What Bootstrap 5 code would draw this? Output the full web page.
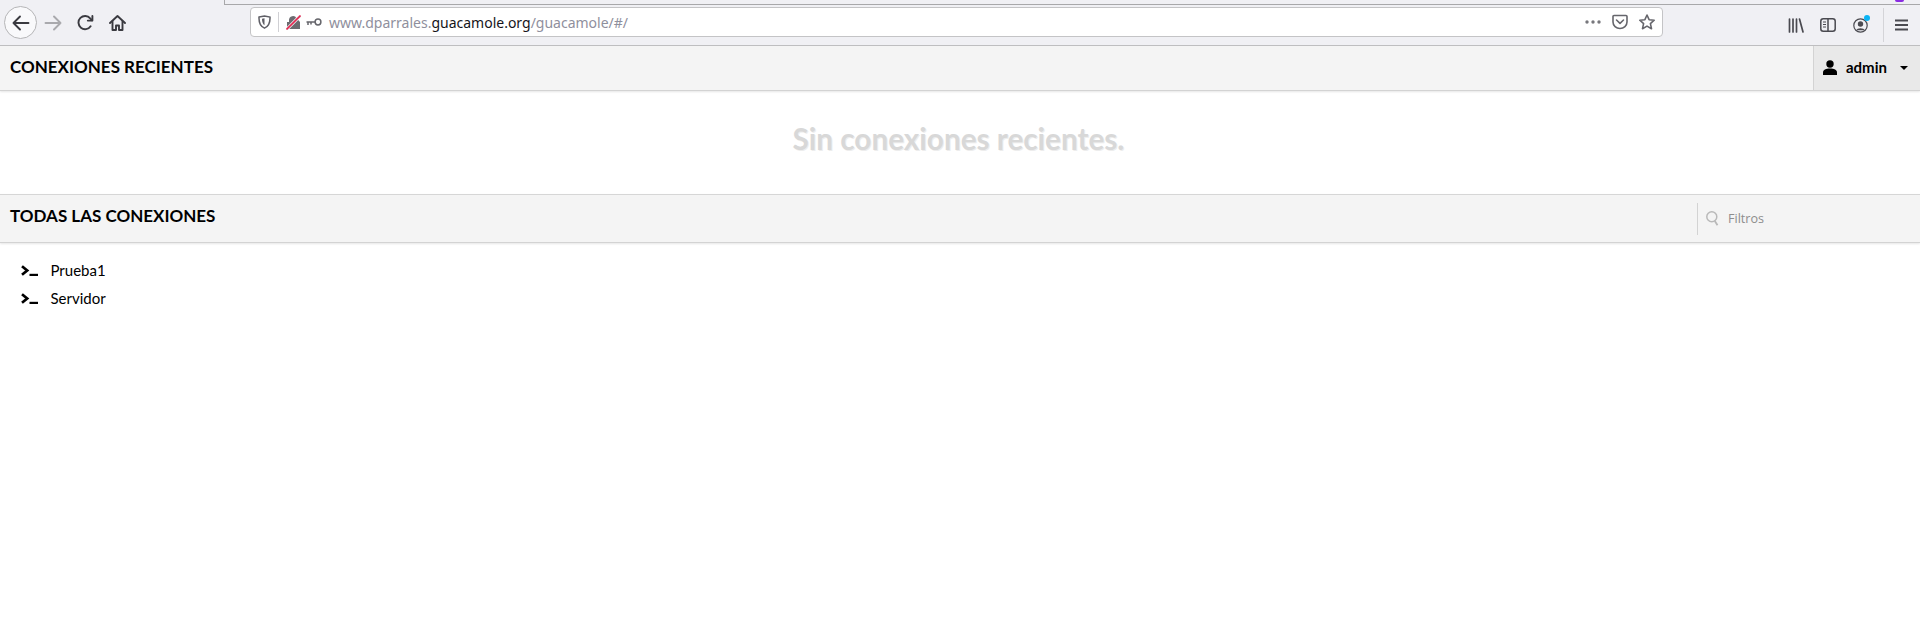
<!DOCTYPE html>
<html lang="es">
<head>
<meta charset="utf-8">
<title>Guacamole</title>
<link href="https://cdn.jsdelivr.net/npm/bootstrap@5.3.0/dist/css/bootstrap.min.css" rel="stylesheet">
<style>
html,body{height:100%;margin:0;background:#fff;overflow:hidden}
body{font-family:"Lato","Liberation Sans",sans-serif;color:#000}
.ffbar{height:46px;background:#f0f0f4;border-bottom:1px solid #bebec0;position:relative}
.tabedge{position:absolute;left:224px;right:0;top:0;height:5px;border-left:1px solid #a8a8aa;border-bottom:1px solid #a8a8aa}
.purplebit{position:absolute;left:1895px;top:0;width:9px;height:2px;background:#8a2be2;border-radius:0 0 5px 5px}
.navgroup{padding-left:4px;width:250px}
.circlebtn{width:33px;height:33px;border:1px solid #b5b5b7;border-radius:50%;background:#f9f9fb}
.navicon{width:32px;height:32px}
.urlbox{width:1413px;height:30px;margin-top:-1px;background:#fff;border:1px solid #c4c4c6;border-radius:4px;font-family:"Noto Sans","Open Sans",sans-serif;font-size:14px;color:#8f8f9d}
.shieldcell{width:28px;height:20px;border-right:1px solid #d0d0d4}
.lockicon{margin-left:7px}
.keyicon{margin-left:5px}
.urltext{margin-left:7px}
.urlhost{color:#15141a}
.toolicon{width:16px;height:16px}
.pageactions{gap:11px;padding-right:7px}
.rightbar{position:absolute;left:1788px;top:8px;height:34px;width:132px}
.rsep{width:1px;height:34px;background:#d4d4d8;margin-left:10px}
.sideicon{margin-left:16px}
.accountwrap{width:20px;height:20px;margin-left:17px}
.accountsvg{left:0;top:3px}
.accountdot{left:11px;top:0;width:6px;height:6px;background:#0ab4f5}
.menuicon{margin-left:11px}
.secbar{background:#f4f4f4;border-bottom:1px solid #d3d3d3;box-shadow:0 1px 2px rgba(0,0,0,.1)}
.topsec{height:45px}
.midsec{height:49px;border-top:1px solid #d6d6d6}
.sectitle{font-size:17px;font-weight:700;padding-left:10px;margin:0 0 4px;line-height:1}
.midsec .sectitle{margin-bottom:6px}
.userbox{width:107px;height:44px;background:#e9e9e9;border-left:1px solid #d3d3d3;padding-left:9px;font-size:15px;font-weight:700;padding-bottom:1px}
.unametxt{margin-left:9px}
.caretdown{width:0;height:0;border-left:4.5px solid transparent;border-right:4.5px solid transparent;border-top:4px solid #000;margin-left:13px}
.emptymsg{height:103px;font-size:29.7px;font-weight:700;color:#d8d8d8;text-shadow:1px 1px 0 #ededed;padding:0 3px 7px 0}
.filterbox{width:223px;height:32px;padding-left:8px;border-left:1px solid #d3d3d3;font-family:"Open Sans",sans-serif;font-size:12.6px;color:#8d8d8d}
.filtertxt{margin-left:9px;padding-top:2px}
.connlist{padding:13px 0 0 21px;font-size:15px}
.connitem{height:28px;gap:12.5px}
</style>
</head>
<body>
<div class="ffbar d-flex align-items-center">
  <div class="tabedge"></div>
  <div class="purplebit"></div>
  <div class="navgroup d-flex align-items-center">
    <div class="circlebtn d-flex align-items-center justify-content-center">
      <svg width="18" height="16" viewBox="0 0 18 16" fill="none" stroke="#3a3a40" stroke-width="1.9" stroke-linecap="round" stroke-linejoin="round"><path d="M1.500 8H16.500M8 1.500 1.500 8 8 14.500"/></svg>
    </div>
    <div class="navicon d-flex align-items-center justify-content-center">
      <svg width="18" height="16" viewBox="0 0 18 16" fill="none" stroke="#a9a9ad" stroke-width="1.9" stroke-linecap="round" stroke-linejoin="round"><path d="M1.500 8H16.500M10 1.500 16.500 8 10 14.500"/></svg>
    </div>
    <div class="navicon d-flex align-items-center justify-content-center">
      <svg width="17" height="16" viewBox="0 0 17 16" fill="none" stroke="#3a3a40" stroke-width="1.9" stroke-linecap="round" stroke-linejoin="round"><path d="M13.600 11.200A6.600 6.600 0 1 1 13.200 3.400L15 5.300"/><path d="M15.400 1V5.600H10.800"/></svg>
    </div>
    <div class="navicon d-flex align-items-center justify-content-center">
      <svg width="17" height="16" viewBox="0 0 17 16" fill="none" stroke="#3a3a40" stroke-width="1.9" stroke-linejoin="round" stroke-linecap="round"><path d="M1 8 8.500 1 16 8"/><path d="M3.500 6.500V15H7V10.500H10V15H13.500V6.500"/></svg>
    </div>
  </div>
  <div class="urlbox d-flex align-items-center">
    <div class="shieldcell d-flex align-items-center justify-content-center">
      <svg width="13" height="14" viewBox="0 0 13 14" fill="none" stroke="#5f5f66" stroke-width="1.500"><path d="M1 2 6.500.9 12 2c.2 5-1 9.300-5.500 11.100C2 11.300.8 7 1 2Z"/><path d="M4 3.800 6.500 3.200V10.300C4.800 9.300 4 7 4 3.800Z" fill="#5f5f66" stroke="none"/></svg>
    </div>
    <svg class="lockicon" width="15" height="15" viewBox="0 0 15 15"><path d="M3 7V5a4 4 0 0 1 7.500-1.800L14 7V14H1V7Z" fill="#6b6b70"/><path d="M.5 14.500 14.500 .5" stroke="#f0f0f4" stroke-width="3.200"/><path d="M.5 14.500 14.500 .5" stroke="#e22850" stroke-width="1.600"/></svg>
    <svg class="keyicon" width="16" height="8" viewBox="0 0 16 8" fill="none" stroke="#66666c" stroke-width="1.500"><circle cx="12" cy="4" r="2.900"/><path d="M9 4H.5M2 4V7M5 4V6.500"/></svg>
    <span class="urltext">www.dparrales.<span class="urlhost">guacamole.org</span>/guacamole/#/</span>
    <div class="ms-auto d-flex align-items-center pageactions">
      <svg width="16" height="4" viewBox="0 0 16 4" fill="#77777c"><circle cx="2" cy="2" r="1.700"/><circle cx="8" cy="2" r="1.700"/><circle cx="14" cy="2" r="1.700"/></svg>
      <svg class="toolicon" viewBox="0 0 16 16" fill="none" stroke="#66666c" stroke-width="1.600" stroke-linecap="round" stroke-linejoin="round"><path d="M1 2.500A1 1 0 0 1 2 1.500H14A1 1 0 0 1 15 2.500V8A7 6.500 0 0 1 1 8Z"/><path d="M4.500 6 8 9.300 11.500 6"/></svg>
      <svg class="toolicon" viewBox="0 0 16 16" fill="none" stroke="#66666c" stroke-width="1.600" stroke-linejoin="round"><path d="M8 1 10.100 5.700 15.200 6.200 11.400 9.600 12.500 14.700 8 12.100 3.500 14.700 4.600 9.600.8 6.200 5.900 5.700Z"/></svg>
    </div>
  </div>
  <div class="rightbar d-flex align-items-center">
    <svg width="16" height="15" viewBox="0 0 16 15" fill="none" stroke="#4a4a50" stroke-width="1.700" stroke-linecap="round"><path d="M1.500 1V14M5 1V14M8.500 1V14M11.500 1 15 14"/></svg>
    <svg class="sideicon" width="16" height="14" viewBox="0 0 16 14" fill="none" stroke="#4a4a50" stroke-width="1.500"><rect x=".8" y=".8" width="14.400" height="12.400" rx="2.500"/><path d="M8 .8V13.200"/><path d="M3 4H6M3 6.500H6M3 9H6" stroke-width="1.200"/></svg>
    <span class="position-relative accountwrap">
      <svg width="15" height="15" viewBox="0 0 15 15" fill="none" stroke="#4a4a50" stroke-width="1.200" class="position-absolute accountsvg"><circle cx="7.500" cy="7.500" r="6.700"/><circle cx="7.500" cy="6" r="2.700" fill="#4a4a50" stroke="none"/><path d="M3.200 12.300C4 9.500 11 9.500 11.800 12.300" fill="#4a4a50" stroke="none"/></svg>
      <span class="position-absolute rounded-circle accountdot"></span>
    </span>
    <span class="rsep"></span>
    <svg class="menuicon" width="13" height="12" viewBox="0 0 13 12" fill="none" stroke="#4a4a50" stroke-width="1.800"><path d="M0 1.500H13M0 6H13M0 10.500H13"/></svg>
  </div>
</div>

<div class="secbar topsec d-flex align-items-center justify-content-between">
  <h1 class="sectitle">CONEXIONES RECIENTES</h1>
  <div class="userbox d-flex align-items-center">
    <svg width="14" height="15" viewBox="0 0 14 15" fill="#000"><circle cx="7" cy="4" r="3.700"/><path d="M0 15V12.500C0 9.800 3 8.500 7 8.500S14 9.800 14 12.500V15Z"/></svg>
    <span class="unametxt">admin</span>
    <span class="caretdown"></span>
  </div>
</div>

<div class="emptymsg d-flex align-items-center justify-content-center">Sin conexiones recientes.</div>

<div class="secbar midsec d-flex align-items-center justify-content-between">
  <h2 class="sectitle">TODAS LAS CONEXIONES</h2>
  <div class="filterbox d-flex align-items-center">
    <svg width="13" height="15" viewBox="0 0 13 15" fill="none" stroke="#b9b9b9" stroke-width="1.500"><circle cx="5.800" cy="5.800" r="5"/><path d="M8.800 10 11.500 14.300" stroke-width="1.800"/></svg>
    <span class="filtertxt">Filtros</span>
  </div>
</div>

<div class="connlist">
  <div class="connitem d-flex align-items-center">
    <svg width="17" height="11" viewBox="0 0 17 11" fill="none" stroke="#000" stroke-width="2.700"><path d="M1 1.200 6.200 5.500 1 9.800"/><path d="M8.500 9.900H17" stroke-width="2.200"/></svg>
    <span>Prueba1</span>
  </div>
  <div class="connitem d-flex align-items-center">
    <svg width="17" height="11" viewBox="0 0 17 11" fill="none" stroke="#000" stroke-width="2.700"><path d="M1 1.200 6.200 5.500 1 9.800"/><path d="M8.500 9.900H17" stroke-width="2.200"/></svg>
    <span>Servidor</span>
  </div>
</div>
<script src="https://cdn.jsdelivr.net/npm/bootstrap@5.3.0/dist/js/bootstrap.bundle.min.js"></script>
</body>
</html>
